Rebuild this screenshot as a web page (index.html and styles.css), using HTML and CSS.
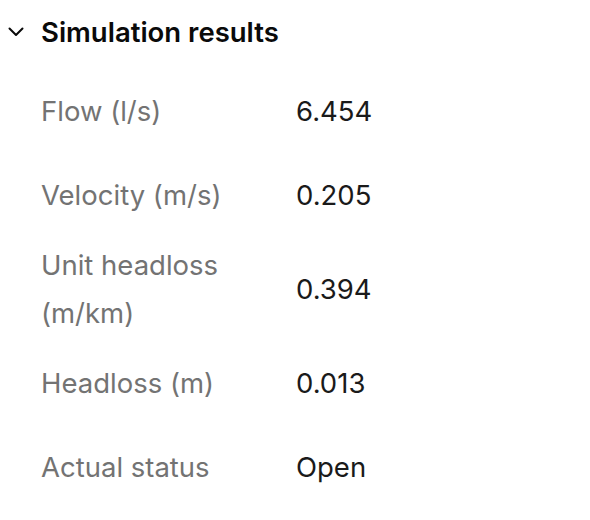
FILE: index.html
```html
<!DOCTYPE html>
<html lang="en">
<head>
    <meta charset="UTF-8">
    <meta name="viewport" content="width=device-width, initial-scale=1.0">
    <title>Simulation results</title>
    <link rel="stylesheet" href="styles.css">
</head>
<body>
    <section class="panel">
        <div class="panel-header">
            <svg class="chevron" width="16" height="16" viewBox="0 0 16 16" fill="none">
                <path d="M1.5 4.5 L8 11 L14.5 4.5" stroke="currentColor" stroke-width="2" stroke-linecap="round" stroke-linejoin="round"/>
            </svg>
            <span class="panel-title">Simulation results</span>
        </div>
        <div class="results">
            <div class="row">
                <span class="label">Flow (l/s)</span>
                <span class="value">6.454</span>
            </div>
            <div class="row">
                <span class="label">Velocity (m/s)</span>
                <span class="value">0.205</span>
            </div>
            <div class="row">
                <span class="label">Unit headloss (m/km)</span>
                <span class="value">0.394</span>
            </div>
            <div class="row">
                <span class="label">Headloss (m)</span>
                <span class="value">0.013</span>
            </div>
            <div class="row">
                <span class="label">Actual status</span>
                <span class="value">Open</span>
            </div>
        </div>
    </section>
</body>
</html>
```

FILE: styles.css
```css
body{
    margin: 0;
    background: #fff;
    font-family: Inter, "Noto Sans", sans-serif;
    font-size: 27.5px;
}
.panel{
    padding: 16px 0 0 8px;
}
.panel-header{
    display: flex;
    align-items: center;
    gap: 17px;
    height: 32px;
    color: #0a0a0a;
}
.chevron{
    flex: none;
}
.panel-title{
    font-weight: 600;
    line-height: 32px;
}
.results{
    display: flex;
    flex-direction: column;
    gap: 8px;
    margin-top: 25px;
    padding-left: 33px;
}
.row{
    display: grid;
    grid-template-columns: 255px 1fr;
    align-items: center;
    min-height: 76px;
}
.label{
    color: #737373;
    line-height: 48px;
    max-width: 210px;
}
.value{
    color: #1a1a1a;
    line-height: 48px;
}
```
